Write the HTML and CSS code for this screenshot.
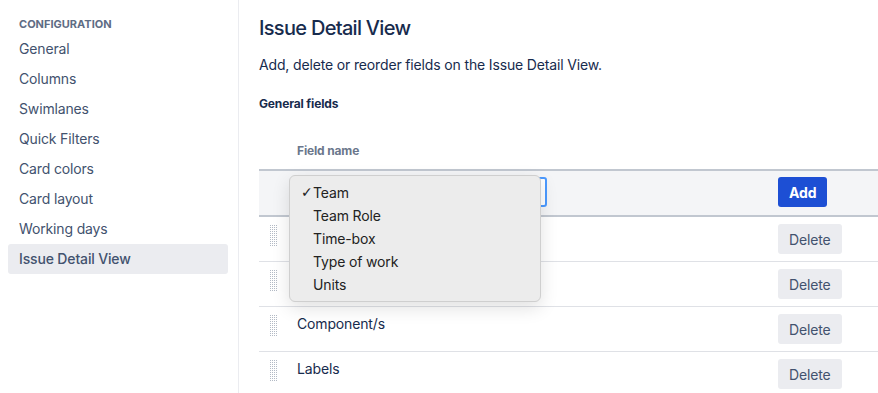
FILE: index.html
```html
<!DOCTYPE html>
<html lang="en">
<head>
    <meta charset="UTF-8">
    <title>Issue Detail View</title>
    <link rel="stylesheet" href="styles.css">
</head>
<body>
<div class="page">
    <nav class="sidebar">
        <div class="sidebar-title">Configuration</div>
        <a class="nav-item" href="#">General</a>
        <a class="nav-item" href="#">Columns</a>
        <a class="nav-item" href="#">Swimlanes</a>
        <a class="nav-item" href="#">Quick Filters</a>
        <a class="nav-item" href="#">Card colors</a>
        <a class="nav-item" href="#">Card layout</a>
        <a class="nav-item" href="#">Working days</a>
        <a class="nav-item active" href="#">Issue Detail View</a>
    </nav>

    <main class="content">
        <h1>Issue Detail View</h1>
        <p class="intro">Add, delete or reorder fields on the Issue Detail View.</p>
        <div class="group-title">General fields</div>

        <div class="fields">
            <div class="row head">
                <div></div>
                <div class="col-name">Field name</div>
                <div></div>
            </div>

            <div class="row add-row">
                <div></div>
                <div class="select-wrap">
                    <div class="fake-select"></div>
                    <!-- открытый список выбора поля -->
                    <ul class="popup">
                        <li><span class="check">✓</span>Team</li>
                        <li>Team Role</li>
                        <li>Time-box</li>
                        <li>Type of work</li>
                        <li>Units</li>
                    </ul>
                </div>
                <div><button class="btn btn-primary">Add</button></div>
            </div>

            <!-- первые две строки закрыты выпадающим списком -->
            <div class="row item">
                <div class="handle"></div>
                <div class="name"></div>
                <div><button class="btn">Delete</button></div>
            </div>
            <div class="row item">
                <div class="handle"></div>
                <div class="name"></div>
                <div><button class="btn">Delete</button></div>
            </div>
            <div class="row item">
                <div class="handle"></div>
                <div class="name">Component/s</div>
                <div><button class="btn">Delete</button></div>
            </div>
            <div class="row item">
                <div class="handle"></div>
                <div class="name">Labels</div>
                <div><button class="btn">Delete</button></div>
            </div>
        </div>
    </main>
</div>
</body>
</html>
```

FILE: styles.css
```css
body {
    margin: 0;
    font-family: Inter, "Noto Sans", sans-serif;
    font-size: 14px;
    letter-spacing: -0.15px;
    color: #172b4d;
    background: #fff;
    overflow: hidden;
}
.page {
    display: flex;
    height: 393px;
}

/* Боковое меню */
.sidebar {
    width: 239px;
    padding: 16px 10px 0 8px;
    box-sizing: border-box;
    border-right: 1px solid #ebecf0;
    display: flex;
    flex-direction: column;
}
.sidebar-title {
    font-size: 11px;
    font-weight: 700;
    line-height: 16px;
    letter-spacing: 0;
    text-transform: uppercase;
    color: #5e6c84;
    padding-left: 11px;
    margin-bottom: 2px;
}
.nav-item {
    display: block;
    height: 30px;
    line-height: 30px;
    padding-left: 11px;
    border-radius: 3px;
    color: #42526e;
    text-decoration: none;
}
.nav-item.active {
    background: #ebecf0;
    font-weight: 500;
}

/* Основная часть */
.content {
    flex: 1;
    padding: 16px 0 0 20px;
}
h1 {
    margin: 0;
    font-size: 20px;
    line-height: 24px;
    font-weight: 500;
    letter-spacing: -0.7px;
}
.intro {
    margin: 15px 0 0;
    line-height: 20px;
}
.group-title {
    margin-top: 21px;
    font-size: 12px;
    font-weight: 700;
    line-height: 16px;
}

.fields {
    margin-top: 31px;
}
.row {
    display: grid;
    grid-template-columns: 38px 1fr 100px;
    align-items: start;
}
.head {
    font-size: 12px;
    font-weight: 700;
    line-height: 16px;
    color: #6b778c;
    padding-bottom: 10px;
    border-bottom: 2px solid #c1c7d0;
}
.add-row {
    height: 46px;
    box-sizing: border-box;
    padding-top: 6px;
    background: #f4f5f7;
    border-bottom: 2px solid #c1c7d0;
}
.item {
    height: 45px;
    box-sizing: border-box;
    padding-top: 7px;
    border-bottom: 1px solid #dfe1e6;
}
.name {
    line-height: 18px;
    padding-top: 1px;
}
.handle {
    width: 8px;
    height: 23px;
    margin-left: 10px;
    background-color: #b3bac5;
    background-image:
        linear-gradient(90deg, #fff 1px, transparent 1px),
        linear-gradient(#fff 1px, transparent 1px);
    background-size: 2px 2px;
}

.select-wrap {
    position: relative;
}
.fake-select {
    width: 250px;
    height: 30px;
    box-sizing: border-box;
    border: 2px solid #4c9aff;
    border-radius: 3px;
    background: #fff;
}
.popup {
    position: absolute;
    top: -2px;
    left: -8px;
    width: 250px;
    margin: 0;
    padding: 5px 0;
    list-style: none;
    background: #ececec;
    border: 1px solid #cfcfcf;
    border-radius: 6px;
    box-shadow: 0 6px 18px rgba(0,0,0,0.12);
    color: #222;
}
.popup li {
    position: relative;
    height: 23px;
    line-height: 23px;
    padding-left: 23px;
}
.check {
    position: absolute;
    left: 11px;
    font-size: 14px;
    font-weight: 700;
    font-family: "DejaVu Sans", sans-serif;
}

.btn {
    height: 30px;
    padding: 0 11px;
    border: none;
    border-radius: 3px;
    background: #ebecf0;
    color: #42526e;
    font-family: inherit;
    font-size: 14px;
    letter-spacing: inherit;
}
.btn-primary {
    background: #1d4fd4;
    color: #fff;
    font-weight: 700;
    padding: 0 11px;
}
```
